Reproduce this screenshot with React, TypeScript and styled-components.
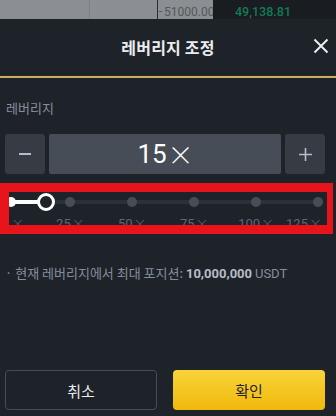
import React from "react";
import styled, { createGlobalStyle } from "styled-components";

const Global = createGlobalStyle`
  html, body { margin: 0; padding: 0; background: #1e2329; }
  body { width: 336px; height: 416px; overflow: hidden; font-family: "Noto Sans CJK KR", "Noto Sans", sans-serif; }
  * { box-sizing: border-box; }
`;

const Page = styled.div`
  position: relative;
  width: 336px;
  height: 416px;
  display: flex;
  flex-direction: column;
  background: #1e2329;
`;

const TopStrip = styled.div`
  height: 19px;
  display: flex;
  flex-shrink: 0;
`;

const ChartArea = styled.div`
  width: 213px;
  background: #8b8e92;
  display: grid;
  grid-template-columns: 89px 1px 67px 1px 1fr;
  align-items: stretch;
`;

const GridLine = styled.div<{ $dark?: boolean }>`
  background: ${(p) => (p.$dark ? "#2a2d31" : "#7d8084")};
`;

const PriceTick = styled.div`
  display: flex;
  align-items: center;
  gap: 2px;
  padding-left: 1px;
  color: #55585c;
  font-family: Roboto, "Liberation Sans", sans-serif;
  font-size: 12px;
  padding-top: 4px;
  &::before {
    content: "";
    width: 3px;
    height: 1px;
    background: #55585c;
  }
`;

const OrderArea = styled.div`
  flex: 1;
  background: #191c21;
  color: #137a55;
  font-family: Roboto, "Liberation Sans", sans-serif;
  font-size: 12.5px;
  font-weight: 500;
  padding-left: 22px;
  padding-top: 4px;
  line-height: 15px;
`;

const Header = styled.div`
  position: relative;
  height: 56px;
  display: flex;
  align-items: center;
  justify-content: center;
  flex-shrink: 0;
`;

const Title = styled.div`
  color: #eaecef;
  font-size: 16px;
  font-weight: 700;
  letter-spacing: 0.2px;
`;

const CloseBtn = styled.div`
  position: absolute;
  right: 7px;
  top: 19px;
  width: 16px;
  height: 16px;
  display: flex;
`;

const Divider = styled.div`
  height: 3px;
  flex-shrink: 0;
  border-top: 1px solid #2c2716;
  background: #c8ae67;
`;

const Body = styled.div`
  padding: 21px 11px 0 5px;
  display: flex;
  flex-direction: column;
`;

const Label = styled.div`
  color: #848e9c;
  font-size: 13px;
  line-height: 18px;
  padding-left: 1px;
`;

const InputRow = styled.div`
  margin-top: 17px;
  height: 40px;
  display: grid;
  grid-template-columns: 40px 1fr 40px;
  gap: 4px;
`;

const StepBtn = styled.div`
  background: #363b44;
  border-radius: 3px;
  display: flex;
  align-items: center;
  justify-content: center;
  color: #b7bdc6;
`;

const ValueBox = styled.div`
  background: #474d57;
  border-radius: 2px;
  display: flex;
  align-items: center;
  justify-content: center;
  color: #ffffff;
  font-family: Roboto, "Liberation Sans", sans-serif;
  font-size: 26px;
  line-height: 30px;
  padding-left: 1px;
`;

const Times = styled.span`
  font-family: "Noto Sans CJK KR", sans-serif;
  font-weight: 300;
  margin-left: 1px;
`;

const SliderWrap = styled.div`
  position: relative;
  height: 36px;
  margin: 19px 0 0 6px;
  width: 307px;
`;

const Track = styled.div`
  position: absolute;
  left: 0;
  right: 0;
  top: 7px;
  height: 4px;
  background: #2b3139;
`;

const Filled = styled.div`
  position: absolute;
  left: 0;
  top: 7px;
  height: 4px;
  background: #ffffff;
`;

const Dot = styled.div<{ $active?: boolean }>`
  position: absolute;
  top: 4px;
  width: 10px;
  height: 10px;
  margin-left: -5px;
  border-radius: 50%;
  background: ${(p) => (p.$active ? "#ffffff" : "#474d57")};
`;

const Knob = styled.div`
  position: absolute;
  top: 0px;
  width: 18px;
  height: 18px;
  margin-left: -9px;
  border-radius: 50%;
  border: 3px solid #ffffff;
  background: #1e2329;
`;

const Mark = styled.div<{ $align: "left" | "center" | "right" }>`
  position: absolute;
  top: 22px;
  color: #5e6673;
  font-family: Roboto, "Liberation Sans", sans-serif;
  font-size: 13px;
  line-height: 15px;
  white-space: nowrap;
  transform: ${(p) =>
    p.$align === "center" ? "translateX(-50%)" : p.$align === "right" ? "translateX(-100%)" : "none"};
`;

const Highlight = styled.div`
  position: absolute;
  left: 0;
  top: 183px;
  width: 333px;
  height: 51px;
  border: 9px solid #e8141c;
  border-right-width: 6px;
  pointer-events: none;
`;

const Info = styled.div`
  margin-top: 35px;
  color: #848e9c;
  font-size: 13px;
  line-height: 18px;
  white-space: nowrap;
`;

const Strong = styled.b`
  color: #b7bdc6;
  font-family: Roboto, "Liberation Sans", sans-serif;
  font-weight: 700;
`;

const Num = styled.span`
  font-family: Roboto, "Liberation Sans", sans-serif;
`;

const Footer = styled.div`
  margin-top: auto;
  padding: 0 11px 6px 5px;
  display: grid;
  grid-template-columns: 1fr 1fr;
  gap: 16px;
`;

const Button = styled.div<{ $primary?: boolean }>`
  height: 40px;
  border-radius: 4px;
  display: flex;
  align-items: center;
  justify-content: center;
  font-size: 15px;
  color: ${(p) => (p.$primary ? "#1e2329" : "#eaecef")};
  border: ${(p) => (p.$primary ? "none" : "1px solid #474d57")};
  background: ${(p) => (p.$primary ? "linear-gradient(180deg, #f8d33a 0%, #f0b90b 100%)" : "transparent")};
`;

const MIN = 1;
const MAX = 125;
const VALUE = 15;
const pos = (v: number) => ((v - MIN) / (MAX - MIN)) * 100;

const marks: { v: number; text: string; align: "left" | "center" | "right" }[] = [
  { v: 1, text: "1", align: "left" },
  { v: 25, text: "25", align: "center" },
  { v: 50, text: "50", align: "center" },
  { v: 75, text: "75", align: "center" },
  { v: 100, text: "100", align: "center" },
  { v: 125, text: "125", align: "right" },
];

const markLeft = (m: { v: number; align: string }) =>
  m.align === "left" ? "-8px" : m.align === "right" ? "calc(100% + 4px)" : `${pos(m.v)}%`;

export default function App() {
  return (
    <Page>
      <Global />
      <TopStrip>
        <ChartArea>
          <div />
          <GridLine />
          <div />
          <GridLine $dark />
          <PriceTick>51000.00</PriceTick>
        </ChartArea>
        <OrderArea>49,138.81</OrderArea>
      </TopStrip>
      <Header>
        <Title>레버리지 조정</Title>
        <CloseBtn>
          <svg width="16" height="16" viewBox="0 0 16 16">
            <path d="M1.5 1.5L14.5 14.5M14.5 1.5L1.5 14.5" stroke="#eaecef" strokeWidth="2" />
          </svg>
        </CloseBtn>
      </Header>
      <Divider />
      <Body>
        <Label>레버리지</Label>
        <InputRow>
          <StepBtn>
            <svg width="12" height="12" viewBox="0 0 12 12">
              <path d="M0 6H12" stroke="#b7bdc6" strokeWidth="2" />
            </svg>
          </StepBtn>
          <ValueBox>
            15<Times>×</Times>
          </ValueBox>
          <StepBtn>
            <svg width="13" height="13" viewBox="0 0 13 13">
              <path d="M0 6.5H13M6.5 0V13" stroke="#b7bdc6" strokeWidth="1.6" />
            </svg>
          </StepBtn>
        </InputRow>
        <SliderWrap>
          <Track />
          <Filled style={{ width: `${pos(VALUE)}%` }} />
          {marks.map((m) => (
            <Dot key={m.v} $active={m.v <= VALUE} style={{ left: `${pos(m.v)}%` }} />
          ))}
          <Knob style={{ left: `${pos(VALUE)}%` }} />
          {marks.map((m) => (
            <Mark key={"l" + m.v} $align={m.align} style={{ left: markLeft(m) }}>
              {m.text}
              <Times>×</Times>
            </Mark>
          ))}
        </SliderWrap>
        <Info>
          · 현재 레버리지에서 최대 포지션: <Strong>10,000,000</Strong> <Num>USDT</Num>
        </Info>
      </Body>
      <Footer>
        <Button>취소</Button>
        <Button $primary>확인</Button>
      </Footer>
      <Highlight />
    </Page>
  );
}
